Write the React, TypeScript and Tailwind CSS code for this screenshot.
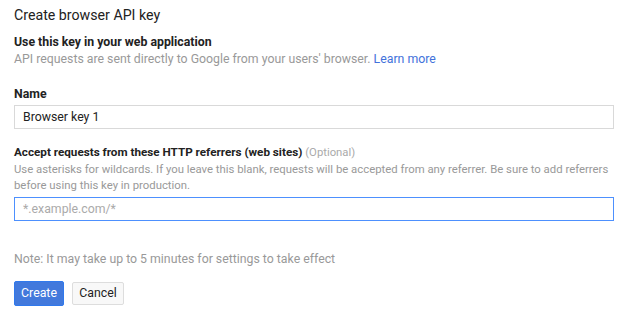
export default function App() {
  return (
    <div className="w-[641px] h-[328px] bg-white px-[14px] pt-[5px] font-['Roboto',sans-serif] text-[12.3px] text-[#222]">
      <h1 className="text-[14.2px] leading-[20px] text-[#222]">Create browser API key</h1>

      <div className="mt-[9px]">
        <p className="font-bold leading-[16px]">Use this key in your web application</p>
        <p className="mt-[1px] leading-[16px] text-[#999]">
          API requests are sent directly to Google from your users' browser.{' '}
          <a className="text-[#4272db]">Learn more</a>
        </p>
      </div>

      <div className="mt-[19px] w-[600px]">
        <label className="block font-bold leading-[16px]">Name</label>
        <input
          className="mt-[3px] block h-[24px] w-full border border-[#d9d9d9] px-[8px] text-[12.3px] text-[#222] outline-none"
          defaultValue="Browser key 1"
        />
      </div>

      <div className="mt-[15px] w-[600px]">
        <label className="block text-[11.7px] font-bold leading-[16px]">
          Accept requests from these HTTP referrers (web sites){' '}
          <span className="text-[11.3px] font-normal text-[#aaa]">(Optional)</span>
        </label>
        <p className="text-[11.35px] leading-[16px] text-[#999]">
          Use asterisks for wildcards. If you leave this blank, requests will be accepted from any referrer. Be sure to add referrers before using this key in production.
        </p>
        <input
          className="mt-[4px] block h-[24px] w-full border border-[#4d90fe] px-[8px] text-[12.3px] text-[#222] outline-none placeholder:text-[#aaa]"
          placeholder="*.example.com/*"
        />
      </div>

      <p className="mt-[30px] leading-[16px] text-[#999]">Note: It may take up to 5 minutes for settings to take effect</p>

      <div className="mt-[14px] flex gap-[8px]">
        <button className="h-[25px] w-[50px] rounded-[2px] border border-[#3079ed] bg-[#4279dc] text-white">Create</button>
        <button className="mt-[1px] h-[23px] w-[52px] rounded-[2px] border border-[#ddd] bg-[#f8f8f8] text-[#222]">Cancel</button>
      </div>
    </div>
  );
}
